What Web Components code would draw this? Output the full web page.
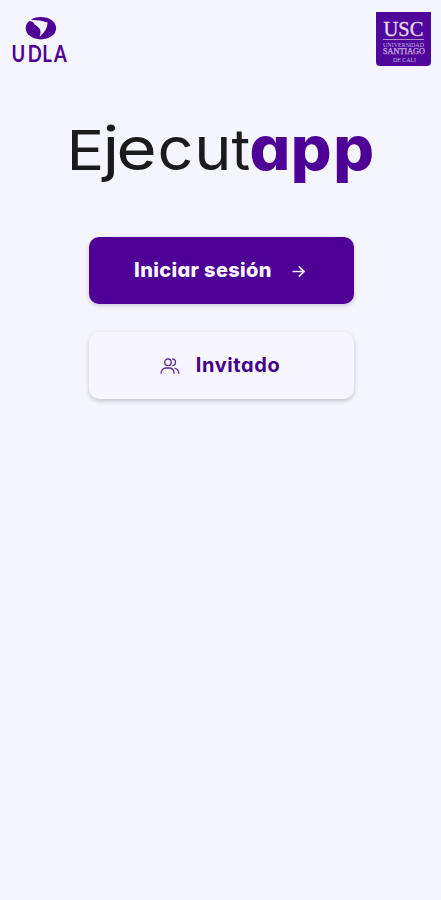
<!DOCTYPE html>
<html lang="es">
<head>
<meta charset="UTF-8">
<meta name="viewport" content="width=device-width, initial-scale=1.0">
<title>Ejecutapp</title>
<style>
  body {
    margin: 0;
    background: #f5f5fd;
    font-family: Inter, 'Liberation Sans', sans-serif;
    --purple: #4e0096;
  }
</style>
</head>
<body>
<welcome-screen></welcome-screen>

<script>
class UdlaLogo extends HTMLElement {
  constructor() {
    super()
    this.attachShadow({ mode: 'open' })
    this.shadowRoot.innerHTML = `
      <style>
        :host { display: block; width: 60px; height: 54px; }
        svg { display: block; overflow: visible; }
        text { font: 700 22.5px Lato, sans-serif; fill: var(--purple); }
      </style>
      <svg width="60" height="54" viewBox="10 12 60 54">
        <ellipse cx="40.9" cy="28.2" rx="15.2" ry="11.2" fill="var(--purple)"/>
        <path d="M26 20L31 19.8Q40 20 47.6 22.6Q47.5 30.5 39.6 36.8Q41.3 31.5 39.8 29Q38 26.2 34.3 24.2Q34 22 30.5 21.2Z" fill="#f5f5fd"/>
        <text transform="scale(0.82 1)" x="14 33.8 51.5 66" y="62">UDLA</text>
      </svg>
    `
  }
}

class UscLogo extends HTMLElement {
  constructor() {
    super()
    this.attachShadow({ mode: 'open' })
    this.shadowRoot.innerHTML = `
      <style>
        :host { display: block; width: 55px; height: 54px; }
        svg { display: block; }
        text { font-family: 'Liberation Serif', serif; fill: #e6dcf3; }
        .name { fill: #c6b1df; }
      </style>
      <svg width="55" height="54" viewBox="0 0 55 54">
        <path d="M0 0H55V50Q55 54 51 54H4Q0 54 0 50Z" fill="#50069a"/>
        <text x="7.5" y="23.5" font-size="22" stroke="#e6dcf3" stroke-width="0.3" textLength="40" lengthAdjust="spacingAndGlyphs">USC</text>
        <path d="M7 27.5H48" stroke="#ae8fd0" stroke-width="1"/>
        <text class="name" x="7" y="34.5" font-size="6" textLength="41" lengthAdjust="spacingAndGlyphs">UNIVERSIDAD</text>
        <text class="name" x="7" y="42" font-size="7.5" stroke="#c6b1df" stroke-width="0.25" textLength="42" lengthAdjust="spacingAndGlyphs">SANTIAGO</text>
        <text class="name" x="17" y="49.5" font-size="6" textLength="23" lengthAdjust="spacingAndGlyphs">DE CALI</text>
      </svg>
    `
  }
}

class AppWordmark extends HTMLElement {
  constructor() {
    super()
    this.attachShadow({ mode: 'open' })
    this.shadowRoot.innerHTML = `
      <style>
        :host { display: block; }
        svg { display: block; width: 100%; height: 80px; overflow: visible; }
        text { font-family: Inter, sans-serif; font-feature-settings: 'cv11'; fill: #1b1b1e; }
        .cap { font-size: 55px; font-weight: 400; }
        .thin { font-size: 61px; font-weight: 400; }
        .narrow { font-size: 60px; font-weight: 400; }
        .tail { font-size: 57px; font-weight: 400; }
        .bold { font-size: 61px; font-weight: 800; fill: var(--purple); }
      </style>
      <svg viewBox="0 116 441 80">
        <text y="170" transform="scale(1.14 1)"><tspan class="cap" x="58.3">E</tspan><tspan class="thin" x="90 102">je</tspan></text>
        <text class="narrow" x="150 185" y="170" transform="scale(1.05 1)">cu</text>
        <text class="tail" x="231.5" y="170">t</text>
        <text y="170" transform="scale(1.05 1)"><tspan class="bold" x="237.6 277 317.4">app</tspan></text>
      </svg>
    `
  }
}

class AppButton extends HTMLElement {
  constructor() {
    super()
    this.attachShadow({ mode: 'open' })
    this.shadowRoot.innerHTML = `
      <style>
        :host {
          display: block;
          width: 265px;
          height: 67px;
        }
        button {
          display: flex;
          align-items: center;
          justify-content: center;
          gap: 16px;
          width: 100%;
          height: 100%;
          border: none;
          border-radius: 10px;
          padding: 0 0 2px;
          background: var(--purple);
          color: #fbf7ff;
          font: 800 20px Inter, sans-serif;
          font-feature-settings: 'cv11';
          letter-spacing: 0.35px;
          box-shadow: 0 2px 4px rgba(50, 30, 110, 0.2);
        }
        :host([variant="light"]) button {
          background: #f7f6fe;
          color: #430087;
          font-weight: 700;
          letter-spacing: 0.6px;
          padding-right: 2px;
          box-shadow: 0 2px 4px rgba(40, 40, 60, 0.24);
        }
        ::slotted(svg) { display: block; flex: none; }
      </style>
      <button><slot></slot></button>
    `
  }
}

class WelcomeScreen extends HTMLElement {
  constructor() {
    super()
    this.attachShadow({ mode: 'open' })
    this.shadowRoot.innerHTML = `
      <style>
        :host {
          display: flex;
          flex-direction: column;
          min-height: 900px;
          box-sizing: border-box;
        }
        header {
          display: flex;
          justify-content: space-between;
          padding: 12px 10px 0;
        }
        app-wordmark { margin-top: 50px; }
        nav {
          display: flex;
          flex-direction: column;
          align-items: center;
          gap: 28px;
          margin: 41px 0 0 1px;
        }
        .label { display: block; }
      </style>
      <header>
        <udla-logo></udla-logo>
        <usc-logo></usc-logo>
      </header>
      <app-wordmark></app-wordmark>
      <nav>
        <app-button>
          <span class="label">Iniciar sesión</span>
          <svg width="20" height="20" viewBox="0 0 20 20" fill="none" stroke="#f3ebfb" stroke-width="1.7">
            <path d="M4.5 11.5H16M10.8 6.3L16 11.5L10.8 16.7"/>
          </svg>
        </app-button>
        <app-button variant="light">
          <svg width="20" height="20" viewBox="0 0 20 20" fill="none" stroke="#5c2b91" stroke-width="1.3">
            <circle cx="8" cy="7.3" r="3.3"/>
            <path d="M1.2 18.8V17.6A5 5 0 0 1 6.2 13H9.8A5 5 0 0 1 14 17.6V18.8M12.2 4A3.3 3.3 0 0 1 12.2 10.6M14.5 13.2Q18.7 14 18.8 18.8"/>
          </svg>
          <span class="label">Invitado</span>
        </app-button>
      </nav>
    `
  }
}

customElements.define('udla-logo', UdlaLogo)
customElements.define('usc-logo', UscLogo)
customElements.define('app-wordmark', AppWordmark)
customElements.define('app-button', AppButton)
customElements.define('welcome-screen', WelcomeScreen)
</script>
</body>
</html>
